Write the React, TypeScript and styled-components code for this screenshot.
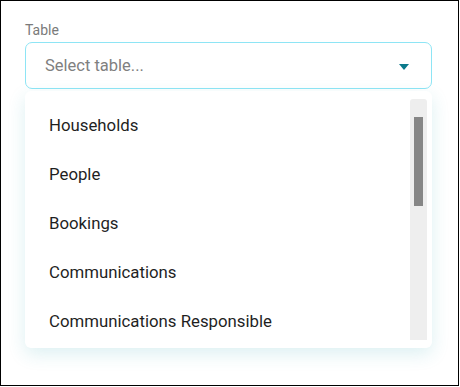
import React from "react";
import styled, { createGlobalStyle } from "styled-components";

const tables = [
  "Households",
  "People",
  "Bookings",
  "Communications",
  "Communications Responsible",
];

const App = () => {
  return (
    <>
      <GlobalStyle />
      <Frame>
        <Label>Table</Label>
        <Select>
          <Placeholder>Select table...</Placeholder>
          <Caret />
        </Select>
        <Menu>
          <List>
            {tables.map((t) => (
              <Item key={t}>{t}</Item>
            ))}
          </List>
          <Track>
            <Thumb />
          </Track>
        </Menu>
      </Frame>
    </>
  );
};

export default App;

const GlobalStyle = createGlobalStyle`
  body {
    margin: 0;
    background: #fff;
    font-family: Roboto, "Liberation Sans", sans-serif;
  }
`;

const Frame = styled.div`
  width: 459px;
  height: 386px;
  box-sizing: border-box;
  border: 1px solid #000;
  padding: 21px 26px 0 24px;
  display: flex;
  flex-direction: column;
`;

const Label = styled.div`
  font-size: 14px;
  line-height: 16px;
  color: #7a7a7a;
  margin-bottom: 4px;
`;

const Select = styled.div`
  height: 47px;
  box-sizing: border-box;
  border: 1px solid #8ee5f5;
  border-radius: 7px;
  display: flex;
  align-items: center;
  justify-content: space-between;
  padding: 0 22px 0 19px;
`;

const Placeholder = styled.span`
  font-size: 16.5px;
  color: #808080;
`;

const Caret = styled.span`
  width: 0;
  height: 0;
  border-left: 5px solid transparent;
  border-right: 5px solid transparent;
  border-top: 6px solid #0b7a8c;
  margin-top: 2px;
`;

const Menu = styled.div`
  margin-top: 2px;
  height: 257px;
  background: #fff;
  border-radius: 6px;
  box-shadow: 0 6px 18px rgba(40, 160, 175, 0.16);
  display: flex;
  padding: 8px 5px 8px 0;
  box-sizing: border-box;
`;

const List = styled.div`
  flex: 1;
  overflow: hidden;
  display: flex;
  flex-direction: column;
  padding-top: 1px;
`;

const Item = styled.div`
  height: 49px;
  flex-shrink: 0;
  display: flex;
  align-items: center;
  padding-left: 24px;
  font-size: 16.8px;
  color: #1f1f1f;
`;

const Track = styled.div`
  width: 17px;
  background: #eeeeee;
  border-radius: 3px 3px 0 0;
  padding-top: 18px;
  display: flex;
  justify-content: center;
`;

const Thumb = styled.div`
  width: 9px;
  height: 89px;
  background: #868686;
`;
